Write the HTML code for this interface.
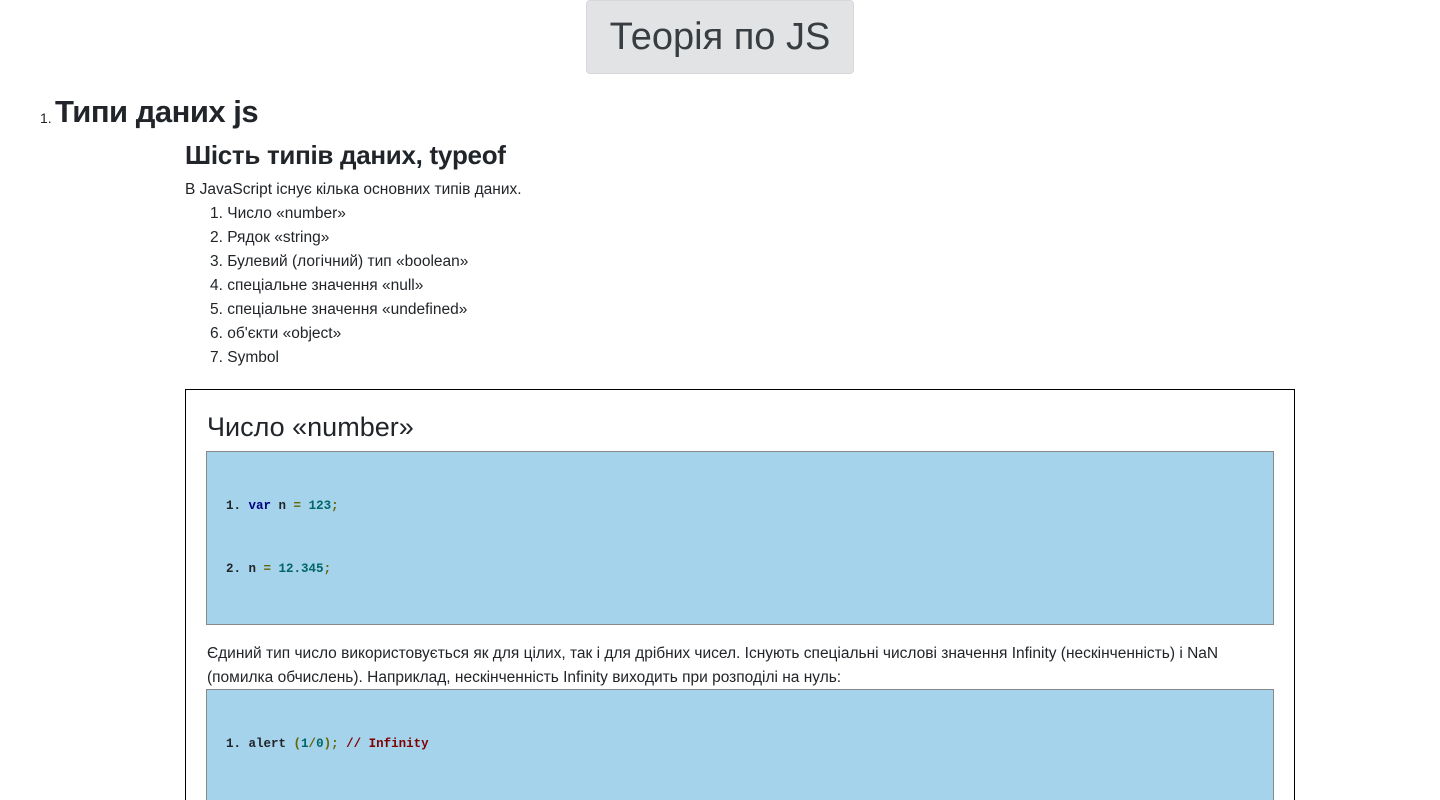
<!DOCTYPE html>
<html><head><meta charset="utf-8"><style>
*{margin:0;padding:0;box-sizing:border-box}
html,body{width:1440px;height:800px;overflow:hidden}
body{background:#fff;font-family:"Liberation Sans",sans-serif;color:#212529;position:relative}
.a{position:absolute;white-space:nowrap}
.btn{left:586px;top:0;width:268px;height:74px;background:#e2e3e5;border:1px solid #d6d8db;border-radius:4px;color:#383d41;font-size:38px;text-align:center;line-height:72px}
.t{font-size:15.5px;line-height:24px}
.code{position:absolute;background:#a5d3ec;border:1px solid #888;font-family:"Liberation Mono",monospace;font-weight:bold;font-size:12.5px}
.code span.l{position:absolute;left:19px;white-space:nowrap}
.k{color:#000080}.n{color:#006666}.o{color:#666600}.c{color:#800000}
</style></head><body>
<div class="a btn">Теорія по JS</div>
<div class="a" style="left:40px;top:110px;font-size:14px">1.</div>
<div class="a" style="left:55px;top:94px;font-size:31px;font-weight:bold;letter-spacing:-0.5px">Типи даних js</div>
<div class="a" style="left:185px;top:140px;font-size:26px;font-weight:bold;letter-spacing:-0.3px">Шість типів даних, typeof</div>
<div class="a t" style="left:185px;top:178px">В JavaScript існує кілька основних типів даних.</div>
<div class="a t" style="left:210px;top:202px">1. Число «number»<br>2. Рядок «string»<br>3. Булевий (логічний) тип «boolean»<br>4. спеціальне значення «null»<br>5. спеціальне значення «undefined»<br>6. об'єкти «object»<br>7. Symbol</div>
<div class="a" style="left:185px;top:389px;width:1110px;height:420px;border:1px solid #000"></div>
<div class="a" style="left:207px;top:412px;font-size:27px">Число «number»</div>
<div class="code" style="left:206px;top:451px;width:1068px;height:174px">
<span class="l" style="top:47px">1. <span class="k">var</span> n <span class="o">=</span> <span class="n">123</span><span class="o">;</span></span>
<span class="l" style="top:110px">2. n <span class="o">=</span> <span class="n">12.345</span><span class="o">;</span></span>
</div>
<div class="a t" style="left:207px;top:642px">Єдиний тип число використовується як для цілих, так і для дрібних чисел. Існують спеціальні числові значення Infinity (нескінченність) і NaN<br>(помилка обчислень). Наприклад, нескінченність Infinity виходить при розподілі на нуль:</div>
<div class="code" style="left:206px;top:689px;width:1068px;height:120px">
<span class="l" style="top:47px">1. alert <span class="o">(</span><span class="n">1</span><span class="o">/</span><span class="n">0</span><span class="o">);</span> <span class="c">// Infinity</span></span>
</div>
</body></html>
